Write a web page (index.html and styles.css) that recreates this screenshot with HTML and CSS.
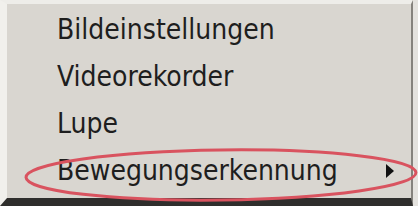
FILE: index.html
```html
<!DOCTYPE html>
<html lang="de">
<head>
    <meta charset="UTF-8">
    <title>Kontextmenü</title>
    <link rel="stylesheet" href="styles.css">
</head>
<body>
    <div class="menu">
        <ul class="menu-list">
            <li class="menu-item">Bildeinstellungen</li>
            <li class="menu-item">Videorekorder</li>
            <li class="menu-item">Lupe</li>
            <li class="menu-item has-sub">Bewegungserkennung<span class="sub-arrow"></span></li>
        </ul>
        <!-- red marker round the last entry -->
        <svg class="marker" width="418" height="206" viewBox="0 0 418 206">
            <ellipse cx="221" cy="175" rx="195" ry="25" transform="rotate(-0.7 221 175)"
                     fill="none" stroke="#d9535f" stroke-width="3"/>
        </svg>
    </div>
</body>
</html>
```

FILE: styles.css
```css
body {
    margin: 0;
    background-color: #e4e2de;
    font-family: "DejaVu Sans", Verdana, sans-serif;
}

.menu {
    position: relative;
    width: 413px;
    height: 206px;
    box-sizing: border-box;
    background-color: #d9d6d0;
    border-left: 7px solid #f1f0ec;
    border-top: 4px solid #eeede9;
    border-right: 2px solid #85827d;
    border-bottom: 8px solid #2f2e2c;
}

.menu-list {
    list-style: none;
    margin: 0;
    padding: 2px 0 0 0;
}

.menu-item {
    display: flex;
    align-items: center;
    height: 47px;
    padding-left: 50px;
    font-size: 28px;
    font-stretch: condensed;
    color: #1e1e1e;
}

.sub-arrow {
    margin-left: auto;
    margin-right: 17px;
    width: 0;
    height: 0;
    border-top: 7px solid transparent;
    border-bottom: 7px solid transparent;
    border-left: 8px solid #111;
}

.marker {
    position: absolute;
    left: -7px;
    top: -4px;
    pointer-events: none;
}
```
